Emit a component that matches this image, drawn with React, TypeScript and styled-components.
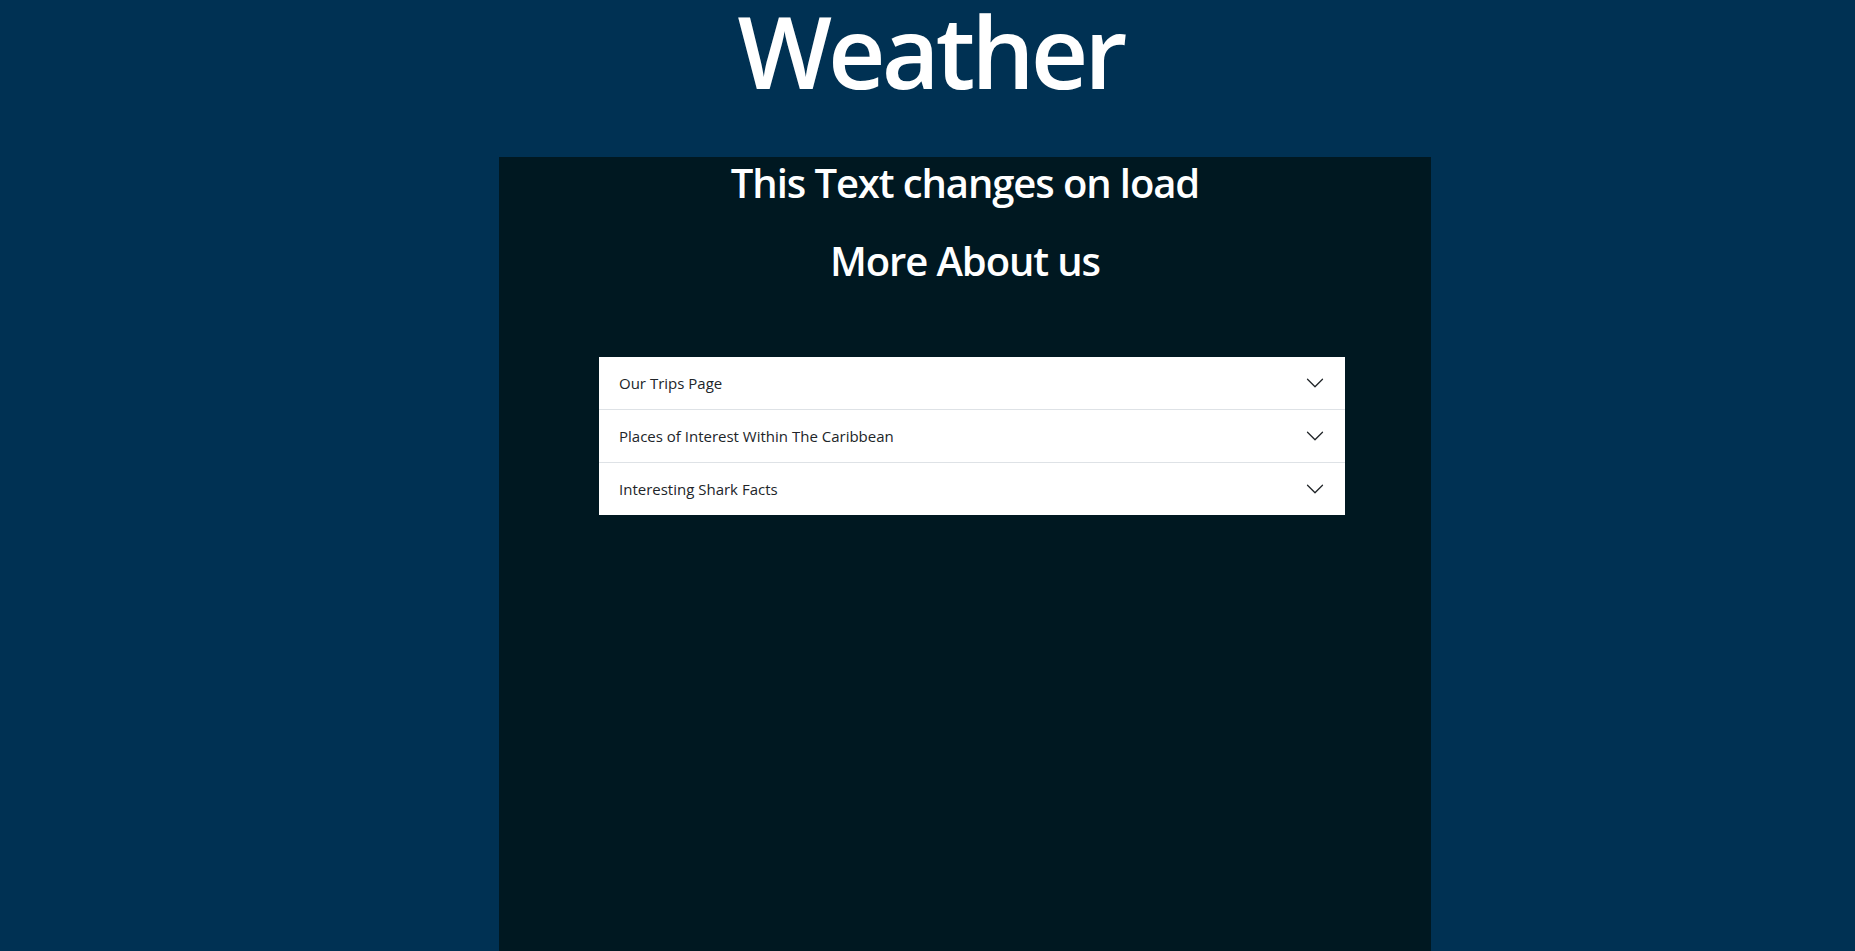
import styled, { createGlobalStyle } from 'styled-components'

const GlobalStyle = createGlobalStyle`
  html,
  body {
    margin: 0;
    padding: 0;
    background-color: #003153;
    font-family: 'Open Sans', 'Noto Sans', Arial, sans-serif;
    color: #212529;
  }

  * {
    box-sizing: border-box;
  }
`

const Page = styled.div`
  min-height: 951px;
  display: flex;
  flex-direction: column;
`

const Title = styled.h1`
  margin: 0 0 57px;
  padding-left: 6px;
  text-align: center;
  color: #fff;
  font-size: 100px;
  line-height: 1;
  font-weight: 600;
  letter-spacing: -4px;
`

const Panel = styled.main`
  flex: 1;
  width: 932px;
  margin-left: 499px;
  padding-top: 2px;
  background-color: #001821;
  display: flex;
  flex-direction: column;
  align-items: center;
`

const Heading = styled.h2<{ $gap: number }>`
  margin: 0 0 ${(p) => p.$gap}px;
  color: #fff;
  font-size: 40px;
  line-height: 48px;
  font-weight: 600;
  letter-spacing: -1.1px;
  text-align: center;
`

const Accordion = styled.div`
  width: 746px;
  margin-left: 14px;
  background-color: #fff;
`

const Item = styled.div`
  & + & {
    border-top: 1px solid #dee2e6;
  }
`

const ItemButton = styled.button`
  display: flex;
  align-items: center;
  justify-content: space-between;
  width: 100%;
  padding: 16px 20px;
  border: none;
  background: transparent;
  font-family: inherit;
  font-size: 15px;
  line-height: 20px;
  color: #212529;
  text-align: left;
  cursor: pointer;

  svg {
    width: 20px;
    height: 20px;
    flex-shrink: 0;
  }
`

const items = [
  'Our Trips Page',
  'Places of Interest Within The Caribbean',
  'Interesting Shark Facts',
]

function Chevron() {
  return (
    <svg viewBox="0 0 16 16" fill="#212529">
      <path
        fillRule="evenodd"
        d="M1.646 4.646a.5.5 0 0 1 .708 0L8 10.293l5.646-5.647a.5.5 0 0 1 .708.708l-6 6a.5.5 0 0 1-.708 0l-6-6a.5.5 0 0 1 0-.708z"
      />
    </svg>
  )
}

export default function App() {
  return (
    <>
      <GlobalStyle />
      <Page>
        <Title>Weather</Title>
        <Panel>
          <Heading $gap={30}>This Text changes on load</Heading>
          <Heading $gap={72}>More About us</Heading>
          <Accordion>
            {items.map((label) => (
              <Item key={label}>
                <ItemButton type="button">
                  {label}
                  <Chevron />
                </ItemButton>
              </Item>
            ))}
          </Accordion>
        </Panel>
      </Page>
    </>
  )
}
